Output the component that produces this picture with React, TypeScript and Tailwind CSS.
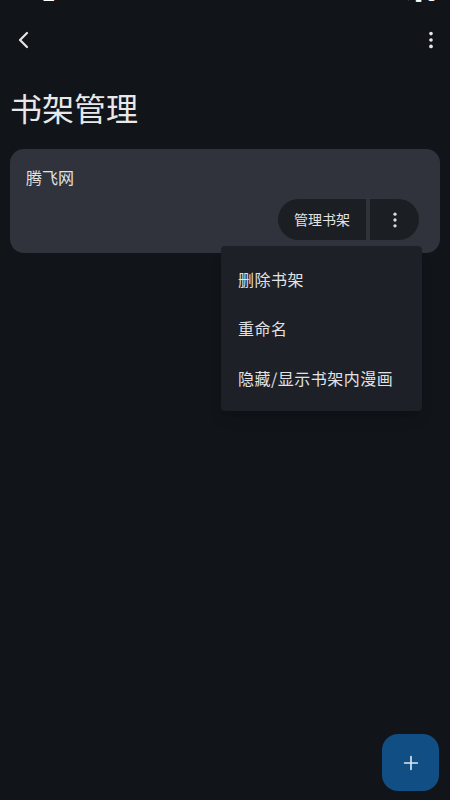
import React from 'react';

const font = { fontFamily: '"Noto Sans CJK SC", "Noto Sans", sans-serif' };

function Kebab({ className = '' }: { className?: string }) {
  return (
    <svg viewBox="0 0 24 24" className={className} fill="currentColor">
      <circle cx="12" cy="5" r="2" />
      <circle cx="12" cy="12" r="2" />
      <circle cx="12" cy="19" r="2" />
    </svg>
  );
}

export default function App() {
  return (
    <div className="relative w-[450px] h-[800px] overflow-hidden bg-[#111418] text-[#e3e3e6]" style={font}>
      {/* Status bar (cut off at top) */}
      <div className="h-[20px] overflow-hidden">
        <div className="flex justify-between px-3 -mt-[13px] text-[13px] leading-[16px] font-bold text-white">
          <span>4:12 ⊠</span>
          <span>▾ ▮ ●</span>
        </div>
      </div>

      {/* Top app bar */}
      <div className="h-[40px] flex items-center justify-between pl-[12px] pr-[8px]">
        <svg viewBox="0 0 24 24" className="w-[24px] h-[24px]" fill="none" stroke="#e6e6e8" strokeWidth="2.2" strokeLinecap="round" strokeLinejoin="round">
          <path d="M15 5l-7 7 7 7" />
        </svg>
        <Kebab className="w-[22px] h-[22px] text-[#e6e6e8]" />
      </div>

      {/* Title */}
      <h1 className="mt-[27px] pl-[10px] text-[32px] leading-[40px] text-[#e8e8ea]">书架管理</h1>

      {/* Card */}
      <div className="mt-[22px] mx-[10px] h-[104px] rounded-[14px] bg-[#30333b] px-[16px] pt-[16px] flex flex-col">
        <div className="text-[16px] leading-[24px] text-[#e2e2e5]">腾飞网</div>
        <div className="mt-[10px] flex justify-end pr-[5px] gap-[4px]">
          <div className="h-[41px] px-[16px] flex items-center rounded-l-full rounded-r-[8px] bg-[#1b1e23] text-[14px] text-[#e2e2e5]">
            管理书架
          </div>
          <div className="h-[41px] w-[49px] flex items-center justify-center rounded-l-[8px] rounded-r-full bg-[#1b1e23]">
            <Kebab className="w-[20px] h-[20px] text-[#d8dbe4]" />
          </div>
        </div>
      </div>

      {/* Dropdown menu */}
      <div className="absolute left-[221px] top-[246px] w-[201px] h-[165px] py-[8px] rounded-[4px] bg-[#1d2027] shadow-lg">
        <div className="h-[49px] flex items-center px-[17px] text-[16px] tracking-[0.5px] text-[#e2e2e5]">删除书架</div>
        <div className="h-[50px] flex items-center px-[17px] text-[16px] tracking-[0.5px] text-[#e2e2e5]">重命名</div>
        <div className="h-[50px] flex items-center px-[17px] text-[16px] tracking-[0.5px] text-[#e2e2e5]">隐藏/显示书架内漫画</div>
      </div>

      {/* FAB */}
      <div className="absolute left-[382px] top-[734px] w-[57px] h-[57px] rounded-[16px] bg-[#114e84] flex items-center justify-center">
        <svg viewBox="0 0 24 24" className="w-[22px] h-[22px]" fill="none" stroke="#dce8f5" strokeWidth="1.8" strokeLinecap="round">
          <path d="M12 5v14M5 12h14" />
        </svg>
      </div>
    </div>
  );
}
